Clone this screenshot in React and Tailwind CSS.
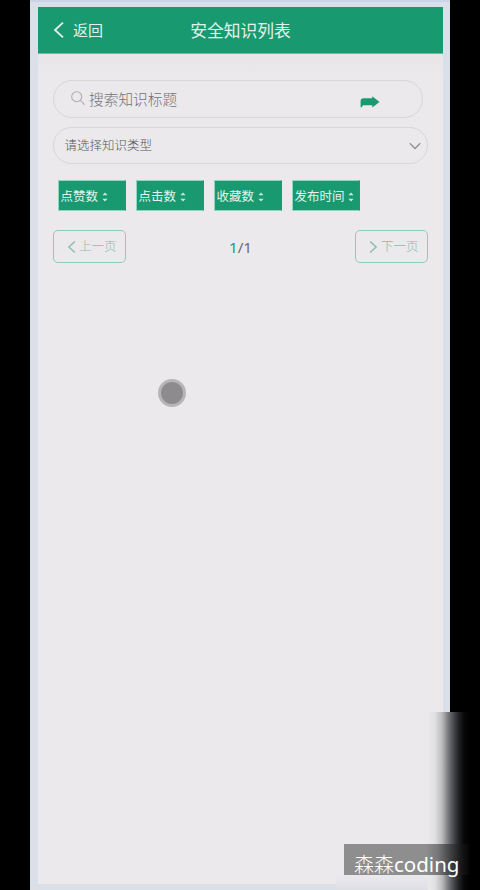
import React from "react";

const sorts = ["点赞数", "点击数", "收藏数", "发布时间"];

function Chevron({ direction, className }) {
  const d = direction === "left" ? "M10 .7 2 8l8 7.3" : "M1 .7 9 8l-8 7.3";
  return (
    <svg viewBox="0 0 11 16" fill="none" stroke="currentColor" className={className}>
      <path d={d} />
    </svg>
  );
}

function SearchIcon() {
  return (
    <svg viewBox="0 0 14 14" fill="none" stroke="#aeadaf" strokeWidth="1.1" className="-mt-[2px] h-[14px] w-[14px] shrink-0">
      <circle cx="5.7" cy="5.7" r="5" />
      <path d="m9.3 9.3 4.4 4.4" />
    </svg>
  );
}

function SortButton({ label }) {
  return (
    <button className="flex h-[31px] w-[68px] items-center border border-[#8bd8ba] border-r-[#43876e] bg-[#19996f] pl-[1.5px] text-left text-[12.5px] leading-none text-[#e5f4ee]">
      <span className="whitespace-nowrap pt-[3px]">{label}</span>
      <svg viewBox="0 0 6 10" fill="#c7e7dc" className="ml-[3.5px] mt-[2px] h-[10px] w-[6px] shrink-0">
        <path d="M.4 3.2 3 .6l2.6 2.6zM.4 6.8h5.2L3 9.4z" />
      </svg>
    </button>
  );
}

function PageButton({ direction, label }) {
  return (
    <button className="flex h-[33px] w-[73px] items-center rounded-[5px] border border-[#91cbb7] pl-[13px] text-[12.5px] leading-none text-[#87bdab]">
      <Chevron direction={direction} className="mr-[3px] h-[12px] w-[9px] shrink-0 stroke-[1.9]" />
      <span className="whitespace-nowrap pt-[2px] font-light">{label}</span>
    </button>
  );
}

export default function App() {
  return (
    <div className="relative h-[890px] w-[480px] overflow-hidden bg-black pl-[30px] font-['Noto_Sans','Noto_Sans_CJK_SC',sans-serif]">
      <div className="h-full w-[420px] border-t-2 border-[#ccd3e8] bg-[#dadfe8] pl-[8px] pr-[7px] pt-[5px]">
        <main className="h-[877px] bg-[#ebe9ec]">
          <header className="relative flex h-[47px] items-center border-b border-[#76b49d] bg-[#19996f] text-[#e1f2ec]">
            <button className="flex items-center pl-[15px] text-[15px] leading-none">
              <Chevron direction="left" className="mr-[9px] h-[16px] w-[11px] stroke-[1.8]" />
              返回
            </button>
            <h1 className="absolute left-0 right-0 pt-[2px] text-center text-[16.8px] font-normal leading-none">安全知识列表</h1>
          </header>

          <div className="h-[26px] bg-gradient-to-b from-[#e8e6e9] to-[#ebe9ec]" />
          <section className="pl-[15px] pr-[15px]">
            <div className="flex h-[38px] w-[370px] items-center rounded-full border border-[#d8d6da] pl-[17px]">
              <SearchIcon />
              <span className="ml-[4px] text-[14.7px] font-light leading-none text-[#737175]">搜索知识标题</span>
              <svg viewBox="0 0 20 12" fill="#19996f" className="ml-auto mr-[42px] mt-[5px] h-[12px] w-[20px]">
                <path d="M.6 11.3V5.2C.6 3.2 1.6 2.3 3.6 2.3h8.7V.3L19.5 6l-7.2 5.5V9.3H4.2C2.7 9.3 2.2 9.8 1.9 11.3z" />
              </svg>
            </div>

            <div className="mt-[9px] flex h-[37px] w-[375px] items-center justify-between rounded-full border border-[#d8d6da] pl-[10.5px] pr-[6px]">
              <span className="pt-[2px] text-[12.5px] font-light leading-none text-[#58565a]">请选择知识类型</span>
              <svg viewBox="0 0 12 8" fill="none" stroke="#929094" strokeWidth="1.3" className="h-[8px] w-[12px]">
                <path d="m.8 1.2 5.2 5.3 5.2-5.3" />
              </svg>
            </div>

            <div className="mt-[16px] flex gap-[10px] pl-[5px]">
              {sorts.map((label) => <SortButton key={label} label={label} />)}
            </div>

            <div className="mt-[19px] flex w-[375px] items-center justify-between">
              <PageButton direction="left" label="上一页" />
              <span className="pt-[2px] text-[15.3px] leading-none text-[#68697b]"><span className="text-[#259776]">1</span>/1</span>
              <PageButton direction="right" label="下一页" />
            </div>
          </section>
        </main>
      </div>

      <div className="absolute left-[158px] top-[379px] h-[28px] w-[28px] rounded-full border-[3px] border-[#b7b5b8] bg-[#8d8b8e]" />
      <div className="absolute left-[428px] top-[712px] h-[178px] w-[52px] bg-[linear-gradient(90deg,#ebe9ec_0px,#e0dfe1_7px,#bbbabc_14px,#66676a_22px,#252629_30px,#080808_36px,#000_42px)]" />
      <div className="absolute left-[336px] top-[875px] h-[15px] w-[92px] bg-gradient-to-b from-[#ebe9ec] to-[#dedfe5]" />
      <div className="absolute left-[344px] top-[844px] flex h-[31px] w-[126px] items-center bg-[linear-gradient(90deg,#8e8e8e_0px,#8e8e8e_82px,#77777a_94px,#424345_106px,#151515_118px,#030303_126px)] pl-[10px] pt-[9px] text-[20px] leading-none text-white">
        <span className="whitespace-nowrap"><span className="font-light">森森</span><span className="text-[20.5px]">coding</span></span>
      </div>
    </div>
  );
}
